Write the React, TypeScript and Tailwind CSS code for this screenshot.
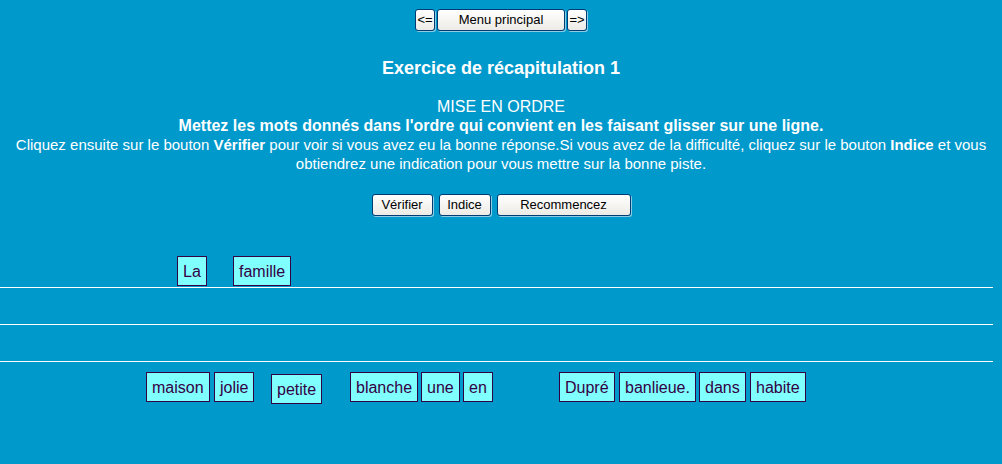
import { useRef, useState, type ButtonHTMLAttributes, type PointerEvent } from "react";
import clsx from "clsx";

type Word = { text: string; x: number; y: number };

// Positions are relative to the top left corner of the board.
const START: Word[] = [
  { text: "La", x: 177, y: 6 },
  { text: "famille", x: 233, y: 6 },
  { text: "maison", x: 146, y: 122 },
  { text: "jolie", x: 214, y: 122 },
  { text: "petite", x: 271, y: 124 },
  { text: "blanche", x: 350, y: 122 },
  { text: "une", x: 421, y: 122 },
  { text: "en", x: 463, y: 122 },
  { text: "Dupré", x: 559, y: 122 },
  { text: "banlieue.", x: 619, y: 122 },
  { text: "dans", x: 699, y: 122 },
  { text: "habite", x: 750, y: 122 },
];

function Button({ className, ...props }: ButtonHTMLAttributes<HTMLButtonElement>) {
  return (
    <button
      type="button"
      className={clsx(
        "flex h-[22px] items-center justify-center rounded-[3px] border border-[#003c74] bg-linear-to-b from-white to-[#ecebe5] text-[13px] leading-4 text-black shadow-[1px_1px_0_#8fcbe2]",
        className,
      )}
      {...props}
    />
  );
}

function Board({ words, onMove }: { words: Word[]; onMove: (index: number, x: number, y: number) => void }) {
  const grab = useRef<{ index: number; dx: number; dy: number } | null>(null);

  const start = (index: number) => (e: PointerEvent<HTMLDivElement>) => {
    e.currentTarget.setPointerCapture(e.pointerId);
    grab.current = { index, dx: e.clientX - words[index].x, dy: e.clientY - words[index].y };
  };
  const move = (e: PointerEvent<HTMLDivElement>) => {
    if (grab.current) {
      onMove(grab.current.index, e.clientX - grab.current.dx, e.clientY - grab.current.dy);
    }
  };
  const end = () => {
    grab.current = null;
  };

  return (
    <section aria-label="Mots à placer" className="relative pb-10">
      <div className="mr-[9px]">
        <div className="h-[38px] border-b border-white" />
        <div className="h-[37px] border-b border-white" />
        <div className="h-[37px] border-b border-white" />
      </div>
      {words.map((word, index) => (
        <div
          key={word.text}
          onPointerDown={start(index)}
          onPointerMove={move}
          onPointerUp={end}
          className="absolute cursor-move touch-none border border-[#330044] bg-[#80ffff] px-[5px] pt-[5px] pb-[3px] text-base leading-5 whitespace-nowrap text-[#330044] select-none"
          style={{ left: word.x, top: word.y }}
        >
          {word.text}
        </div>
      ))}
    </section>
  );
}

export default function App() {
  const [words, setWords] = useState(START);

  const moveWord = (index: number, x: number, y: number) =>
    setWords((current) => current.map((word, i) => (i === index ? { ...word, x, y } : word)));

  return (
    <main className="min-h-screen bg-[#0099cc] pt-[9px] font-['Liberation_Sans',Arial,sans-serif] text-white">
      <nav className="flex justify-center gap-0.5">
        <Button className="w-5" aria-label="Page précédente">{"<="}</Button>
        <Button className="w-32">Menu principal</Button>
        <Button className="w-5" aria-label="Page suivante">{"=>"}</Button>
      </nav>

      <h1 className="mt-[25px] text-center text-lg leading-6 font-bold">Exercice de récapitulation 1</h1>

      <div className="mt-[17px] text-center text-base leading-[19px]">
        <p>MISE EN ORDRE</p>
        <p className="font-bold">Mettez les mots donnés dans l'ordre qui convient en les faisant glisser sur une ligne.</p>
        <p className="text-[15px] leading-[19px]">
          Cliquez ensuite sur le bouton <strong>Vérifier</strong> pour voir si vous avez eu la bonne réponse.Si vous
          avez de la difficulté, cliquez sur le bouton <strong>Indice</strong> et vous obtiendrez une indication pour
          vous mettre sur la bonne piste.
        </p>
      </div>

      <div className="mt-[21px] mb-[34px] flex justify-center gap-[6px]">
        <Button className="w-[61px]">Vérifier</Button>
        <Button className="w-[52px]">Indice</Button>
        <Button className="w-[134px]" onClick={() => setWords(START)}>Recommencez</Button>
      </div>

      <Board words={words} onMove={moveWord} />
    </main>
  );
}
